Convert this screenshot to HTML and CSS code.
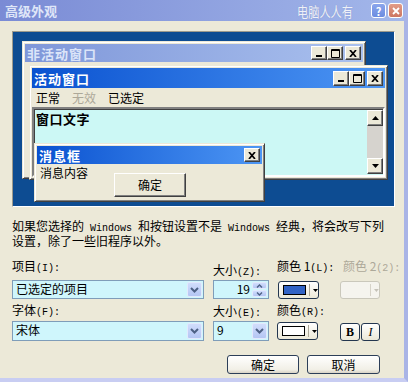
FILE: index.html
```html
<!DOCTYPE html>
<html lang="zh-CN">
<head>
  <meta charset="UTF-8">
  <title>高级外观</title>
  <link rel="stylesheet" href="styles.css">
</head>
<body>
  <div class="dialog">
    <div class="titlebar">
      <span class="title">高级外观</span>
      <span class="mark">电脑人人有</span>
      <span class="tbtn help">?</span>
      <span class="tbtn close">
        <svg width="8" height="8" viewBox="0 0 8 8"><path d="M1 1 L7 7 M7 1 L1 7" stroke="#fff" stroke-width="1.8"/></svg>
      </span>
    </div>

    <div class="body">
      <!-- preview: windows on a little desktop -->
      <div class="preview">
        <div class="win inactive">
          <div class="cap">
            <span class="cap-name">非活动窗口</span>
            <span class="cb"><svg width="8" height="8" viewBox="0 0 8 8"><rect x="1" y="6" width="6" height="2"/></svg></span>
            <span class="cb"><svg width="9" height="9" viewBox="0 0 9 9"><path d="M0.5 0.5 H8.5 V8.5 H0.5 Z" fill="none" stroke="#000"/><rect x="0" y="1" width="9" height="1"/></svg></span>
            <span class="cb x"><svg width="8" height="7" viewBox="0 0 8 7"><path d="M1 0 L7 7 M7 0 L1 7" stroke="#000" stroke-width="1.7"/></svg></span>
          </div>
        </div>

        <div class="win active">
          <div class="cap">
            <span class="cap-name">活动窗口</span>
            <span class="cb"><svg width="8" height="8" viewBox="0 0 8 8"><rect x="1" y="6" width="6" height="2"/></svg></span>
            <span class="cb"><svg width="9" height="9" viewBox="0 0 9 9"><path d="M0.5 0.5 H8.5 V8.5 H0.5 Z" fill="none" stroke="#000"/><rect x="0" y="1" width="9" height="1"/></svg></span>
            <span class="cb x"><svg width="8" height="7" viewBox="0 0 8 7"><path d="M1 0 L7 7 M7 0 L1 7" stroke="#000" stroke-width="1.7"/></svg></span>
          </div>
          <div class="menu">
            <span>正常</span>
            <span class="dim">无效</span>
            <span>已选定</span>
          </div>
          <div class="textarea">
            <div class="wtext">窗口文字</div>
            <div class="vscroll">
              <span class="sb"><svg width="7" height="4" viewBox="0 0 7 4"><polygon points="3.5,0 7,4 0,4"/></svg></span>
              <span class="track"></span>
              <span class="sb"><svg width="7" height="4" viewBox="0 0 7 4"><polygon points="0,0 7,0 3.5,4"/></svg></span>
            </div>
          </div>
        </div>

        <div class="win msgbox">
          <div class="cap">
            <span class="cap-name">消息框</span>
            <span class="cb"><svg width="8" height="7" viewBox="0 0 8 7"><path d="M1 0 L7 7 M7 0 L1 7" stroke="#000" stroke-width="1.7"/></svg></span>
          </div>
          <div class="msgbody">
            <span>消息内容</span>
            <span class="classic-btn">确定</span>
          </div>
        </div>
      </div>

      <p class="note">如果您选择的<span class="lat word">Windows</span>和按钮设置不是<span class="lat word">Windows</span>经典，将会改写下列<br>设置，除了一些旧程序以外。</p>

      <div class="fields">
        <div class="lbl">项目<span class="lat">(I):</span></div>
        <div class="lbl low">大小<span class="lat">(Z):</span></div>
        <div class="lbl">颜色 1<span class="lat">(L):</span></div>
        <div class="lbl off-lbl">颜色 2<span class="lat">(2):</span></div>

        <div class="combo">
          <span class="val">已选定的项目</span>
          <span class="drop"><svg width="9" height="6" viewBox="0 0 9 6"><path d="M1 1 L4.5 4.5 L8 1" fill="none" stroke="#4d6185" stroke-width="2"/></svg></span>
        </div>
        <div class="spin">
          <span class="val right">19</span>
          <span class="arrows">
            <span><svg width="7" height="4" viewBox="0 0 7 4"><path d="M1 3.5 L3.5 1 L6 3.5" fill="none" stroke="#4d6185" stroke-width="1.4"/></svg></span>
            <span><svg width="7" height="4" viewBox="0 0 7 4"><path d="M1 0.5 L3.5 3 L6 0.5" fill="none" stroke="#4d6185" stroke-width="1.4"/></svg></span>
          </span>
        </div>
        <div class="colorbtn">
          <span class="swatch blue"></span>
          <span class="sep"></span>
          <svg class="tri" width="5" height="3" viewBox="0 0 5 3"><polygon points="0,0 5,0 2.5,3"/></svg>
        </div>
        <div class="colorbtn off">
          <span class="swatch"></span>
          <span class="sep"></span>
          <svg class="tri" width="5" height="3" viewBox="0 0 5 3"><polygon points="0,0 5,0 2.5,3" fill="#c5c2b8"/></svg>
        </div>

        <div class="lbl row2">字体<span class="lat">(F):</span></div>
        <div class="lbl row2 low">大小<span class="lat">(E):</span></div>
        <div class="lbl row2">颜色<span class="lat">(R):</span></div>
        <div></div>

        <div class="combo tall">
          <span class="val">宋体</span>
          <span class="drop"><svg width="9" height="6" viewBox="0 0 9 6"><path d="M1 1 L4.5 4.5 L8 1" fill="none" stroke="#4d6185" stroke-width="2"/></svg></span>
        </div>
        <div class="combo tall small">
          <span class="val">9</span>
          <span class="drop"><svg width="9" height="6" viewBox="0 0 9 6"><path d="M1 1 L4.5 4.5 L8 1" fill="none" stroke="#4d6185" stroke-width="2"/></svg></span>
        </div>
        <div class="colorbtn row2btn">
          <span class="swatch"></span>
          <span class="sep"></span>
          <svg class="tri" width="5" height="3" viewBox="0 0 5 3"><polygon points="0,0 5,0 2.5,3"/></svg>
        </div>
        <div class="fmt-group">
          <span class="fmt bold">B</span>
          <span class="fmt ital">I</span>
        </div>
      </div>

      <div class="actions">
        <span class="xbtn">确定</span>
        <span class="xbtn">取消</span>
      </div>
    </div>
  </div>
</body>
</html>
```

FILE: styles.css
```css
* { box-sizing: border-box; }
body {
  margin: 0;
  font-family: "Noto Sans CJK SC", sans-serif;
  font-size: 12px;
  color: #000;
  background: #ece9d8;
}
.dialog {
  width: 408px; height: 382px;
  background: #ece9d8;
  border-right: 4px solid #a9b4e6;
  border-bottom: 4px solid #c8cdf2;
  overflow: hidden;
}

/* title bar */
.titlebar {
  height: 21px;
  display: flex; align-items: center;
  padding: 0 1px 0 5px;
  background: linear-gradient(to right, #7a8bd5, #a3b7ea);
}
.title { color: #dfe6f8; font-weight: bold; font-size: 13px; }
.mark {
  margin-left: auto; margin-right: 11px;
  color: #eef1f8; font-size: 14px;
  transform: scaleX(0.8);
  text-shadow: 0 0 1px #7f8fc6;
}
.tbtn {
  width: 15px; height: 15px;
  border: 1px solid #fff; border-radius: 3px;
  display: flex; align-items: center; justify-content: center;
  color: #fff; font-weight: bold; font-size: 11px;
}
.help { background: linear-gradient(#8aa5ec, #6c8ce0); margin-right: 2px; }
.close { background: linear-gradient(#e29c88, #cc7561); }

.body { padding: 10px 0 0 12px; }

/* preview desktop */
.preview {
  position: relative;
  width: 383px; height: 176px;
  background: #0d4c92;
  border: 1px solid;
  border-color: #9d9a8c #fff #fff #9d9a8c;
}
.win {
  position: absolute;
  background: #ece9d8;
  border: 1px solid;
  border-color: #ece9d8 #404040 #404040 #ece9d8;
  box-shadow: inset 1px 1px #fff, inset -1px -1px #808080;
  padding: 2px;
  display: flex; flex-direction: column;
}
.inactive { left: 9px; top: 9px; width: 344px; height: 138px; }
.active { left: 16px; top: 33px; width: 359px; height: 115px; }
.msgbox { left: 21px; top: 111px; width: 231px; height: 59px; }

.cap {
  display: flex; align-items: center;
  height: 18px; padding: 0 2px;
  font-weight: bold; font-size: 13px; letter-spacing: 1px;
  color: #fff;
  background: linear-gradient(to right, #0a52d0, #4d96f4);
}
.inactive .cap {
  background: linear-gradient(to right, #7f97d9, #a9c0ee);
  color: #dbe4f8;
}
.active .cap { height: 20px; }
.cap-name { flex: 1; }
.cb {
  width: 16px; height: 14px;
  background: #ece9d8;
  border: 1px solid;
  border-color: #fff #404040 #404040 #fff;
  box-shadow: inset -1px -1px #808080;
  display: flex; align-items: center; justify-content: center;
}
.active .cb { height: 15px; }
.cb.x { margin-left: 2px; }

.menu {
  display: flex; gap: 12px;
  height: 19px; line-height: 19px;
  padding-left: 4px;
}
.dim { color: #aca899; }
.textarea {
  flex: 1;
  display: flex;
  background: #ccf8f5;
  border: 2px solid;
  border-color: #808080 #fff #fff #808080;
  box-shadow: inset 1px 1px #404040;
}
.wtext {
  flex: 1;
  padding: 2px 0 0 2px;
  font-weight: bold; font-size: 13px; letter-spacing: 0.5px;
  line-height: 16px;
}
.vscroll {
  width: 16px;
  display: flex; flex-direction: column;
  background: #d6d3ce;
  margin: 1px 0;
}
.sb {
  height: 16px;
  background: #ece9d8;
  border: 1px solid;
  border-color: #fff #404040 #404040 #fff;
  box-shadow: inset -1px -1px #808080;
  display: flex; align-items: center; justify-content: center;
}
.track { flex: 1; }

.msgbody {
  display: flex; align-items: flex-start;
  padding: 2px 0 0 3px;
  line-height: 14px;
}
.classic-btn {
  margin: 7px 0 0 26px;
  width: 72px; height: 24px;
  background: #ece9d8;
  border: 1px solid;
  border-color: #fff #404040 #404040 #fff;
  box-shadow: inset -1px -1px #808080;
  display: flex; align-items: center; justify-content: center;
}

/* lower form */
.note { margin: 13px 0 0; line-height: 12px; width: 378px; }
.lat { font-family: "Liberation Mono", monospace; font-size: 10px; }
.lat.word { margin: 0 6px; }

.fields {
  display: grid;
  grid-template-columns: 201px 64px 63px 40px;
  grid-template-rows: 21px 19px 22px 20px;
  margin-top: 12px;
  line-height: 14px;
  white-space: nowrap;
}
.lbl.low { padding-top: 4px; }
.lbl.row2 { padding-top: 4px; }
.lbl.row2.low { padding-top: 5px; }
.off-lbl { color: #aca899; padding-left: 3px; }

.combo, .spin {
  display: flex;
  width: 192px;
  border: 1px solid #7f9db9;
  background: #cff6fc;
  padding: 1px;
}
.spin, .combo.small { width: 56px; }
.combo .val, .spin .val { flex: 1; padding-left: 2px; line-height: 14px; }
.val.right { text-align: right; padding-right: 2px; }
.drop {
  width: 15px;
  background: linear-gradient(#d1ddfc, #b4c6f3);
  border: 1px solid #e2e9fd;
  border-radius: 2px;
  display: flex; align-items: center; justify-content: center;
}
.arrows { width: 15px; display: flex; flex-direction: column; gap: 1px; }
.arrows span {
  flex: 1;
  background: linear-gradient(#d1ddfc, #b4c6f3);
  border: 1px solid #e2e9fd;
  border-radius: 2px;
  display: flex; align-items: center; justify-content: center;
}

.colorbtn {
  align-self: start;
  margin: 1px 0 0 1px;
  width: 41px; height: 18px;
  border: 1px solid #23364f; border-radius: 3px;
  background: linear-gradient(#fff, #ece9d8);
  display: flex; align-items: center;
  padding-left: 4px;
}
.colorbtn.row2btn { margin-left: 0; }
.swatch { width: 23px; height: 10px; border: 1px solid #000; background: #fff; }
.swatch.blue { background: #3163c5; }
.sep { width: 1px; height: 12px; background: #aca899; margin-left: 3px; }
.tri { margin-left: 3px; }
.colorbtn.off {
  margin-left: 0;
  width: 40px;
  border-color: #cac8bb;
  background: #f5f4ee;
}
.colorbtn.off .swatch { visibility: hidden; }
.colorbtn.off .sep { background: #d6d3c8; }

.fmt-group { display: flex; gap: 1px; margin-top: 2px; align-self: start; }
.fmt {
  width: 20px; height: 18px;
  border: 1px solid #23364f; border-radius: 3px;
  background: linear-gradient(#fff, #ece9d8);
  display: flex; align-items: center; justify-content: center;
  font-family: "Liberation Serif", serif; font-size: 12px;
}
.fmt.bold { font-weight: bold; }
.fmt.ital { font-style: italic; width: 19px; }

.actions {
  display: flex; justify-content: flex-end; gap: 8px;
  width: 368px; margin-top: 14px;
}
.xbtn {
  width: 72px; height: 19px;
  border: 1px solid #2c3e58; border-radius: 3px;
  background: linear-gradient(#fff, #f1efe6 80%, #d8d2c6);
  text-align: center; line-height: 17px;
}
.xbtn + .xbtn { width: 73px; }
```
